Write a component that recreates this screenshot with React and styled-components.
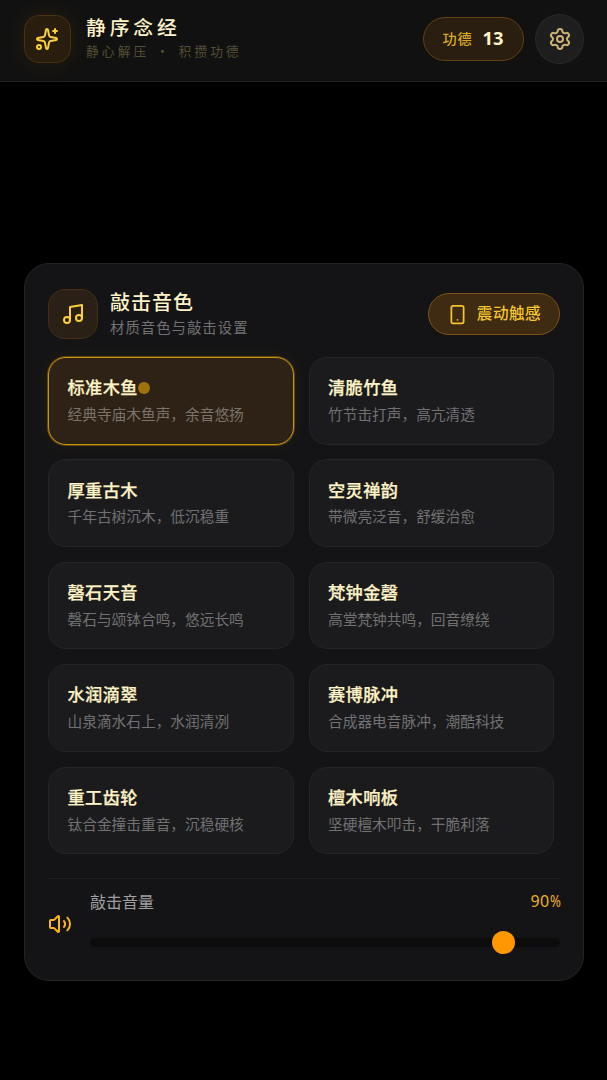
import React, { useState } from "react";
import styled, { createGlobalStyle, css } from "styled-components";
import { Music, Settings, Smartphone, Sparkles, Volume2 } from "lucide-react";

const GlobalStyle = createGlobalStyle`
  * {
    box-sizing: border-box;
  }

  body {
    margin: 0;
    background: #000000;
    font-family: "Noto Sans", "Noto Sans CJK SC", sans-serif;
    color: #fef3c7;
  }

  button {
    font-family: inherit;
    margin: 0;
    cursor: pointer;
  }
`;

const Page = styled.div`
  min-height: 1080px;
  display: flex;
  flex-direction: column;
`;

const Header = styled.header`
  height: 82px;
  padding: 0 23px 3px 24px;
  display: flex;
  align-items: center;
  background: #111111;
  border-bottom: 1px solid #222222;
`;

const LogoBox = styled.div`
  width: 47px;
  height: 48px;
  padding-right: 1px;
  display: flex;
  align-items: center;
  justify-content: center;
  border: 1px solid #4b320f;
  border-radius: 15px;
  background: #291d0e;
  color: #fcd03a;
  box-shadow: 0 0 24px rgba(245, 158, 11, 0.1);
`;

const Brand = styled.div`
  flex: 1;
  margin-left: 15px;
`;

const BrandName = styled.h1`
  margin: 0;
  font-size: 19.8px;
  font-weight: 500;
  line-height: 24px;
  letter-spacing: 3.9px;
`;

const Tagline = styled.p`
  margin: 0;
  font-size: 12.7px;
  line-height: 23px;
  letter-spacing: 3.15px;
  word-spacing: 4.2px;
  white-space: pre;
  color: #555034;
`;

const Merit = styled.div`
  width: 101px;
  height: 44px;
  padding-right: 1px;
  display: flex;
  align-items: center;
  justify-content: center;
  gap: 10px;
  border: 1px solid #62400f;
  border-radius: 22px;
  background: #291e0f;
`;

const MeritLabel = styled.span`
  padding-bottom: 3px;
  font-size: 14.2px;
  font-weight: 500;
  letter-spacing: 0.8px;
  color: #d9a925;
`;

const MeritCount = styled.span`
  padding-bottom: 3px;
  font-size: 18.4px;
  font-weight: 700;
`;

const SettingsButton = styled.button`
  width: 49px;
  height: 50px;
  margin-left: 11px;
  padding: 0;
  display: flex;
  align-items: center;
  justify-content: center;
  border: 1px solid #292929;
  border-radius: 50%;
  background: #1e1e1e;
  color: #cfb573;
`;

const Main = styled.main`
  flex: 1;
  padding: 181px 23px 0 24px;
`;

const Panel = styled.section`
  height: 718px;
  padding: 25px 23px 0;
  border: 1px solid #242425;
  border-radius: 25px;
  background: #141416;
`;

const PanelHeader = styled.div`
  height: 50px;
  display: flex;
  align-items: center;
`;

const PanelIcon = styled.div`
  width: 50px;
  height: 50px;
  display: flex;
  align-items: center;
  justify-content: center;
  border: 1px solid #462f16;
  border-radius: 17px;
  background: #2a2015;
  color: #fcd03a;
`;

const PanelHeading = styled.div`
  flex: 1;
  margin-left: 12px;
`;

const PanelTitle = styled.h2`
  margin: 0;
  padding-top: 1px;
  font-size: 20px;
  font-weight: 500;
  line-height: 26px;
  letter-spacing: 1px;
`;

const PanelHint = styled.p`
  margin: 0;
  font-size: 14.4px;
  line-height: 24px;
  letter-spacing: 1px;
  color: #717173;
`;

const HapticButton = styled.button`
  width: 132px;
  height: 42px;
  padding: 0;
  display: flex;
  align-items: center;
  justify-content: center;
  gap: 9px;
  border: 1px solid #7d5317;
  border-radius: 21px;
  background: ${({ $on }) => ($on ? "#3e2b12" : "#1b1b1d")};
  color: #f5c52f;
  font-size: 15.6px;
  font-weight: 500;
  letter-spacing: 0.5px;
`;

const HapticLabel = styled.span`
  padding-bottom: 3px;
`;

const SoundGrid = styled.div`
  margin: 18px 6px 0 0;
  display: grid;
  grid-template-columns: 1fr 1fr;
  grid-auto-rows: 87.6px;
  gap: 14.8px 15px;
`;

const SoundCard = styled.button`
  padding: 17px 0 0 18.5px;
  display: flex;
  flex-direction: column;
  align-items: flex-start;
  border: 1px solid #252526;
  border-radius: 18px;
  background: #1b1b1d;
  text-align: left;

  ${({ $active }) =>
    $active &&
    css`
      border-color: #c8930f;
      background: #2d2215;
      box-shadow: 0 0 0 1px rgba(200, 147, 15, 0.4),
        0 0 18px rgba(245, 158, 11, 0.08);
    `}
`;

const SoundName = styled.span`
  display: flex;
  align-items: center;
  height: 26px;
  padding-bottom: 2.4px;
  font-size: 17.2px;
  font-weight: 500;
  letter-spacing: 0.43px;
  color: #fef3c7;
  -webkit-text-stroke: 0.25px currentColor;
`;

const ActiveDot = styled.i`
  width: 12px;
  height: 12px;
  margin-top: 2.4px;
  border-radius: 50%;
  background: #a0720c;
`;

const SoundDescription = styled.span`
  height: 28px;
  font-size: 14.7px;
  line-height: 27.4px;
  white-space: nowrap;
  color: ${({ $active }) => ($active ? "#7b736a" : "#717172")};
`;

const VolumeRow = styled.div`
  margin-top: 24px;
  padding-top: 10px;
  display: flex;
  border-top: 1px solid #202021;
`;

const VolumeIcon = styled.div`
  width: 42px;
  padding-top: 23px;
  color: #fbb51f;

  svg {
    display: block;
  }
`;

const VolumeControl = styled.div`
  flex: 1;
`;

const VolumeLabels = styled.div`
  height: 24px;
  display: flex;
  align-items: center;
  justify-content: space-between;
  font-size: 16px;
  color: #a0a0a2;
`;

const VolumeValue = styled.span`
  letter-spacing: 0.4px;
  color: #eeb120;
`;

const Percent = styled.span`
  display: inline-block;
  width: 10.4px;
  letter-spacing: 0;
  transform: scaleX(0.82);
  transform-origin: left;
`;

const Slider = styled.input`
  appearance: none;
  display: block;
  width: 100%;
  height: 9px;
  margin: 25px 0 0;
  border-radius: 5px;
  background: #0c0c0c;

  &::-webkit-slider-thumb {
    appearance: none;
    width: 23px;
    height: 23px;
    border-radius: 50%;
    background: #ff9800;
  }
`;

const sounds = [
  { name: "标准木鱼", description: "经典寺庙木鱼声，余音悠扬" },
  { name: "清脆竹鱼", description: "竹节击打声，高亢清透" },
  { name: "厚重古木", description: "千年古树沉木，低沉稳重" },
  { name: "空灵禅韵", description: "带微亮泛音，舒缓治愈" },
  { name: "磬石天音", description: "磬石与颂钵合鸣，悠远长鸣" },
  { name: "梵钟金磬", description: "高堂梵钟共鸣，回音缭绕" },
  { name: "水润滴翠", description: "山泉滴水石上，水润清冽" },
  { name: "赛博脉冲", description: "合成器电音脉冲，潮酷科技" },
  { name: "重工齿轮", description: "钛合金撞击重音，沉稳硬核" },
  { name: "檀木响板", description: "坚硬檀木叩击，干脆利落" },
];

const App = () => {
  const [active, setActive] = useState(0);
  const [haptic, setHaptic] = useState(true);
  const [volume, setVolume] = useState(90);

  return (
    <>
      <GlobalStyle />
      <Page>
        <Header>
          <LogoBox>
            <Sparkles size={24} />
          </LogoBox>
          <Brand>
            <BrandName>静序念经</BrandName>
            <Tagline>静心解压 • 积攒功德</Tagline>
          </Brand>
          <Merit>
            <MeritLabel>功德</MeritLabel>
            <MeritCount>13</MeritCount>
          </Merit>
          <SettingsButton aria-label="设置">
            <Settings size={24} />
          </SettingsButton>
        </Header>

        <Main>
          <Panel>
            <PanelHeader>
              <PanelIcon>
                <Music size={24} />
              </PanelIcon>
              <PanelHeading>
                <PanelTitle>敲击音色</PanelTitle>
                <PanelHint>材质音色与敲击设置</PanelHint>
              </PanelHeading>
              <HapticButton $on={haptic} onClick={() => setHaptic(!haptic)}>
                <Smartphone size={21} />
                <HapticLabel>震动触感</HapticLabel>
              </HapticButton>
            </PanelHeader>

            <SoundGrid>
              {sounds.map(({ name, description }, i) => (
                <SoundCard
                  key={name}
                  $active={i === active}
                  onClick={() => setActive(i)}
                >
                  <SoundName>
                    {name}
                    {i === active && <ActiveDot />}
                  </SoundName>
                  <SoundDescription $active={i === active}>
                    {description}
                  </SoundDescription>
                </SoundCard>
              ))}
            </SoundGrid>

            <VolumeRow>
              <VolumeIcon>
                <Volume2 size={24} />
              </VolumeIcon>
              <VolumeControl>
                <VolumeLabels>
                  <span>敲击音量</span>
                  <VolumeValue>
                    {volume}
                    <Percent>%</Percent>
                  </VolumeValue>
                </VolumeLabels>
                <Slider
                  type="range"
                  min="0"
                  max="100"
                  value={volume}
                  onChange={(e) => setVolume(Number(e.target.value))}
                />
              </VolumeControl>
            </VolumeRow>
          </Panel>
        </Main>
      </Page>
    </>
  );
};

export default App;
